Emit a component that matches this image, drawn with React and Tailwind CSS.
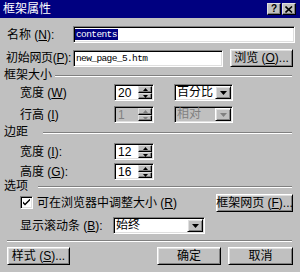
import React from "react";

const sunken =
  "border border-t-[#808080] border-l-[#808080] border-b-white border-r-white shadow-[inset_1px_1px_0_#000,inset_-1px_-1px_0_#dfdfdf]";
const raised =
  "border border-t-white border-l-white border-b-black border-r-black shadow-[inset_1px_1px_0_#dfdfdf,inset_-1px_-1px_0_#808080]";
const raisedSmall =
  "border border-t-[#dfdfdf] border-l-[#dfdfdf] border-b-black border-r-black shadow-[inset_-1px_-1px_0_#808080]";

function K({ k }) {
  return <span className="underline underline-offset-1">{k}</span>;
}

function Tri({ up, gray }) {
  return (
    <svg width="5" height="3" viewBox="0 0 5 3">
      <polygon points={up ? "2.5,0 5,3 0,3" : "0,0 5,0 2.5,3"} fill={gray ? "#808080" : "#000"} />
    </svg>
  );
}

function Spin({ value, disabled }) {
  return (
    <div
      className={
        disabled
          ? `${sunken} w-[40px] h-[17px] flex bg-[#c0c0c0] text-[#808080]`
          : `${sunken} w-[40px] h-[17px] flex bg-white text-black`
      }
    >
      <div className="flex-1 pl-[3px] pt-[1px] text-[12px] leading-[14px]">{value}</div>
      <div className="flex flex-col w-[15px] py-[1px] pr-[1px]">
        <div className={`${raisedSmall} h-[7px] bg-[#c0c0c0] flex items-center justify-center`}>
          <Tri up gray={disabled} />
        </div>
        <div className={`${raisedSmall} h-[6px] bg-[#c0c0c0] flex items-center justify-center`}>
          <Tri gray={disabled} />
        </div>
      </div>
    </div>
  );
}

function Select({ value, disabled, wide }) {
  const w = wide ? "w-[92px]" : "w-[59px]";
  return (
    <div
      className={
        disabled
          ? `${sunken} ${w} h-[17px] flex bg-[#c0c0c0] text-[#808080]`
          : `${sunken} ${w} h-[17px] flex bg-white text-black`
      }
    >
      <div className="flex-1 pl-[2px] leading-[15px]">{value}</div>
      <div className={`${raised} w-[16px] m-[1px] bg-[#c0c0c0] flex items-center justify-center`}>
        <svg width="7" height="4" viewBox="0 0 7 4">
          <polygon points="0,0 7,0 3.5,4" fill={disabled ? "#808080" : "#000"} />
        </svg>
      </div>
    </div>
  );
}

function Header({ label, w }) {
  return (
    <div className="flex items-center h-[13px] pr-[8px]">
      <div className={`${w} pl-[4px] leading-[13px]`}>{label}</div>
      <div className="flex-1 h-[2px] border-t border-t-[#808080] border-b border-b-white" />
    </div>
  );
}

function Btn({ children, w }) {
  return (
    <div className={`${raised} ${w} h-[18px] bg-[#c0c0c0] flex items-center justify-center leading-[14px]`}>
      {children}
    </div>
  );
}

export default function App() {
  return (
    <div className="w-[300px] h-[272px] bg-[#c0c0c0] flex flex-col whitespace-nowrap text-[12px] text-black font-['Liberation_Sans','Noto_Sans_CJK_SC',sans-serif] overflow-hidden">
      {/* title bar */}
      <div className="h-[18px] bg-[#000080] flex items-center pl-[3px] pr-[4px]">
        <span className="flex-1 text-white leading-[16px]">框架属性</span>
        <div className={`${raisedSmall} w-[14px] h-[12px] bg-[#c0c0c0] flex items-center justify-center text-[10px] font-bold leading-[10px]`}>
          ?
        </div>
        <div className={`${raisedSmall} ml-[1px] w-[14px] h-[12px] bg-[#c0c0c0] flex items-center justify-center`}>
          <svg width="8" height="7" viewBox="0 0 8 7">
            <path d="M0.5 0.5 L7 6.5 M7 0.5 L0.5 6.5" stroke="#000" strokeWidth="1.6" />
          </svg>
        </div>
      </div>

      {/* name */}
      <div className="flex items-center h-[17px] mt-[8px]">
        <div className="w-[73px] pl-[7px]">
          名称 (<K k="N" />):
        </div>
        <div className={`${sunken} w-[222px] h-[17px] bg-white flex items-center pl-[1px]`}>
          <span className="bg-[#000080] text-white px-[1px] text-[9.5px] leading-[11px] tracking-[-0.6px] font-['Liberation_Mono',monospace]">
            contents
          </span>
        </div>
      </div>

      {/* initial page */}
      <div className="flex items-center h-[18px] mt-[6px]">
        <div className="w-[73px] pl-[6px] tracking-[-0.3px]">
          初始网页(<K k="P" />):
        </div>
        <div className={`${sunken} w-[150px] h-[17px] bg-white flex items-center pl-[2px]`}>
          <span className="text-[9.5px] leading-[11px] tracking-[-0.6px] font-['Liberation_Mono',monospace]">
            new_page_5.htm
          </span>
        </div>
        <div className="ml-[7px]">
          <Btn w="w-[63px]">
            浏览 (<K k="O" />)...
          </Btn>
        </div>
      </div>

      <div className="mt-[2px]">
        <Header label="框架大小" w="w-[55px]" />
      </div>

      <div className="flex items-center h-[17px] mt-[2px]">
        <div className="w-[114px] pl-[20px]">
          宽度 (<K k="W" />)
        </div>
        <Spin value="20" />
        <div className="ml-[20px]">
          <Select value="百分比" />
        </div>
      </div>

      <div className="flex items-center h-[17px] mt-[5px]">
        <div className="w-[114px] pl-[20px]">
          行高 (<K k="I" />)
        </div>
        <Spin value="1" disabled />
        <div className="ml-[20px]">
          <Select value="相对" disabled />
        </div>
      </div>

      <div className="mt-[3px]">
        <Header label="边距" w="w-[43px]" />
      </div>

      <div className="flex items-center h-[17px] mt-[4px]">
        <div className="w-[114px] pl-[20px]">
          宽度 (<K k="I" />):
        </div>
        <Spin value="12" />
      </div>

      <div className="flex items-center h-[17px] mt-[3px]">
        <div className="w-[114px] pl-[20px]">
          高度 (<K k="G" />):
        </div>
        <Spin value="16" />
      </div>

      <Header label="选项" w="w-[38px]" />

      <div className="flex items-center h-[19px] pr-[7px]">
        <div className="pl-[20px] flex items-center flex-1">
          <div className={`${sunken} w-[13px] h-[13px] bg-white flex items-center justify-center`}>
            <svg width="7" height="7" viewBox="0 0 7 7">
              <path d="M0 2.5 L0 4.5 L2 6.5 L7 1.5 L7 -0.5 L2 4.5 Z" fill="#000" />
            </svg>
          </div>
          <span className="ml-[4px]">
            可在浏览器中调整大小 (<K k="R" />)
          </span>
        </div>
        <Btn w="w-[77px]">
          框架网页 (<K k="F" />)...
        </Btn>
      </div>

      <div className="flex items-center h-[17px] mt-[5px]">
        <div className="w-[113px] pl-[20px]">
          显示滚动条 (<K k="B" />):
        </div>
        <Select value="始终" wide />
      </div>

      <div className="ml-[7px] mr-[8px] mt-[6px] h-[2px] border-t border-t-[#808080] border-b border-b-white" />

      <div className="flex items-center mt-[5px] pl-[7px]">
        <Btn w="w-[63px]">
          样式 (<K k="S" />)...
        </Btn>
        <div className="ml-[87px] flex gap-[7px]">
          <Btn w="w-[64px]">确定</Btn>
          <Btn w="w-[65px]">取消</Btn>
        </div>
      </div>
    </div>
  );
}
